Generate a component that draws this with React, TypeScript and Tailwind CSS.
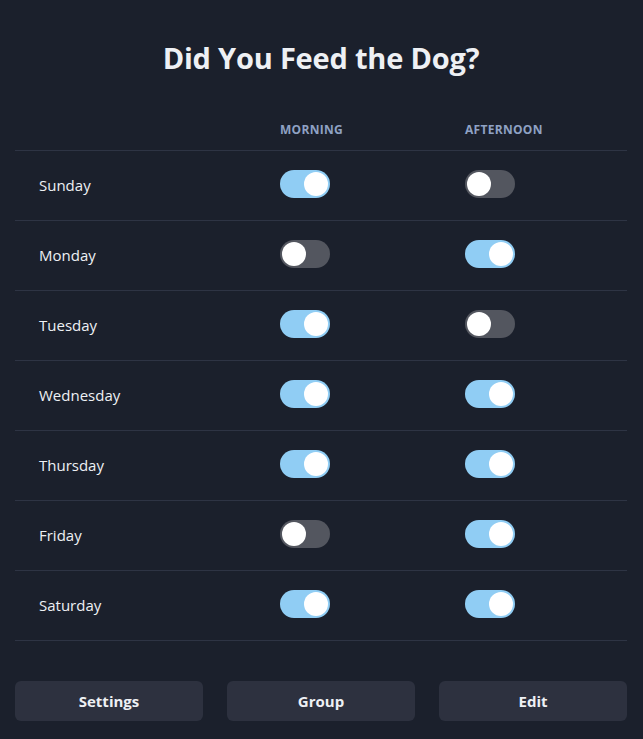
import { useState } from 'react';

type Slot = 'morning' | 'afternoon';

interface DayRow {
  day: string;
  morning: boolean;
  afternoon: boolean;
}

const initialDays: DayRow[] = [
  { day: 'Sunday', morning: true, afternoon: false },
  { day: 'Monday', morning: false, afternoon: true },
  { day: 'Tuesday', morning: true, afternoon: false },
  { day: 'Wednesday', morning: true, afternoon: true },
  { day: 'Thursday', morning: true, afternoon: true },
  { day: 'Friday', morning: false, afternoon: true },
  { day: 'Saturday', morning: true, afternoon: true },
];

const Toggle = ({ on, onClick }: { on: boolean; onClick: () => void }) => (
  <button
    onClick={onClick}
    className={`relative w-[50px] h-[28px] rounded-full transition-colors ${on ? 'bg-[#90cdf4]' : 'bg-[#53565f]'}`}
  >
    <span
      className={`absolute top-[2px] w-[24px] h-[24px] rounded-full bg-white transition-all ${on ? 'left-[24px]' : 'left-[2px]'}`}
    />
  </button>
);

export default function App() {
  const [days, setDays] = useState<DayRow[]>(initialDays);

  const toggle = (index: number, slot: Slot) => {
    setDays(prev => prev.map((d, i) => (i === index ? { ...d, [slot]: !d[slot] } : d)));
  };

  return (
    <div
      className="min-h-[739px] bg-[#1b202c] text-[#eef0f4] pl-[15px] pr-[16px]"
      style={{ fontFamily: '"Open Sans", "Noto Sans", sans-serif' }}
    >
      <h1 className="pt-[38px] h-[78px] text-center text-[29px] leading-[40px] font-bold tracking-[-0.2px]">
        Did You Feed the Dog?
      </h1>

      <div className="mt-[31px]">
        <div className="grid grid-cols-[241px_185px_1fr] h-[42px] border-b border-[#2e3444]">
          <div />
          <div className="pl-6 pt-[12px] text-[12px] font-bold tracking-[0.3px] text-[#8fa2c4]">MORNING</div>
          <div className="pl-6 pt-[12px] text-[12px] font-bold tracking-[0.3px] text-[#8fa2c4]">AFTERNOON</div>
        </div>

        {days.map((d, i) => (
          <div
            key={d.day}
            className="grid grid-cols-[241px_185px_1fr] items-center h-[70px] border-b border-[#2e3444]"
          >
            <div className="pl-6 text-[15px]">{d.day}</div>
            <div className="pl-6 flex mb-[3px]">
              <Toggle on={d.morning} onClick={() => toggle(i, 'morning')} />
            </div>
            <div className="pl-6 flex mb-[3px]">
              <Toggle on={d.afternoon} onClick={() => toggle(i, 'afternoon')} />
            </div>
          </div>
        ))}
      </div>

      <div className="grid grid-cols-3 gap-6 mt-[40px]">
        {['Settings', 'Group', 'Edit'].map(label => (
          <button
            key={label}
            className="h-[40px] rounded-md bg-[#2d313f] text-[15px] font-bold text-[#eef0f4] hover:bg-[#363b4b]"
          >
            {label}
          </button>
        ))}
      </div>
    </div>
  );
}
